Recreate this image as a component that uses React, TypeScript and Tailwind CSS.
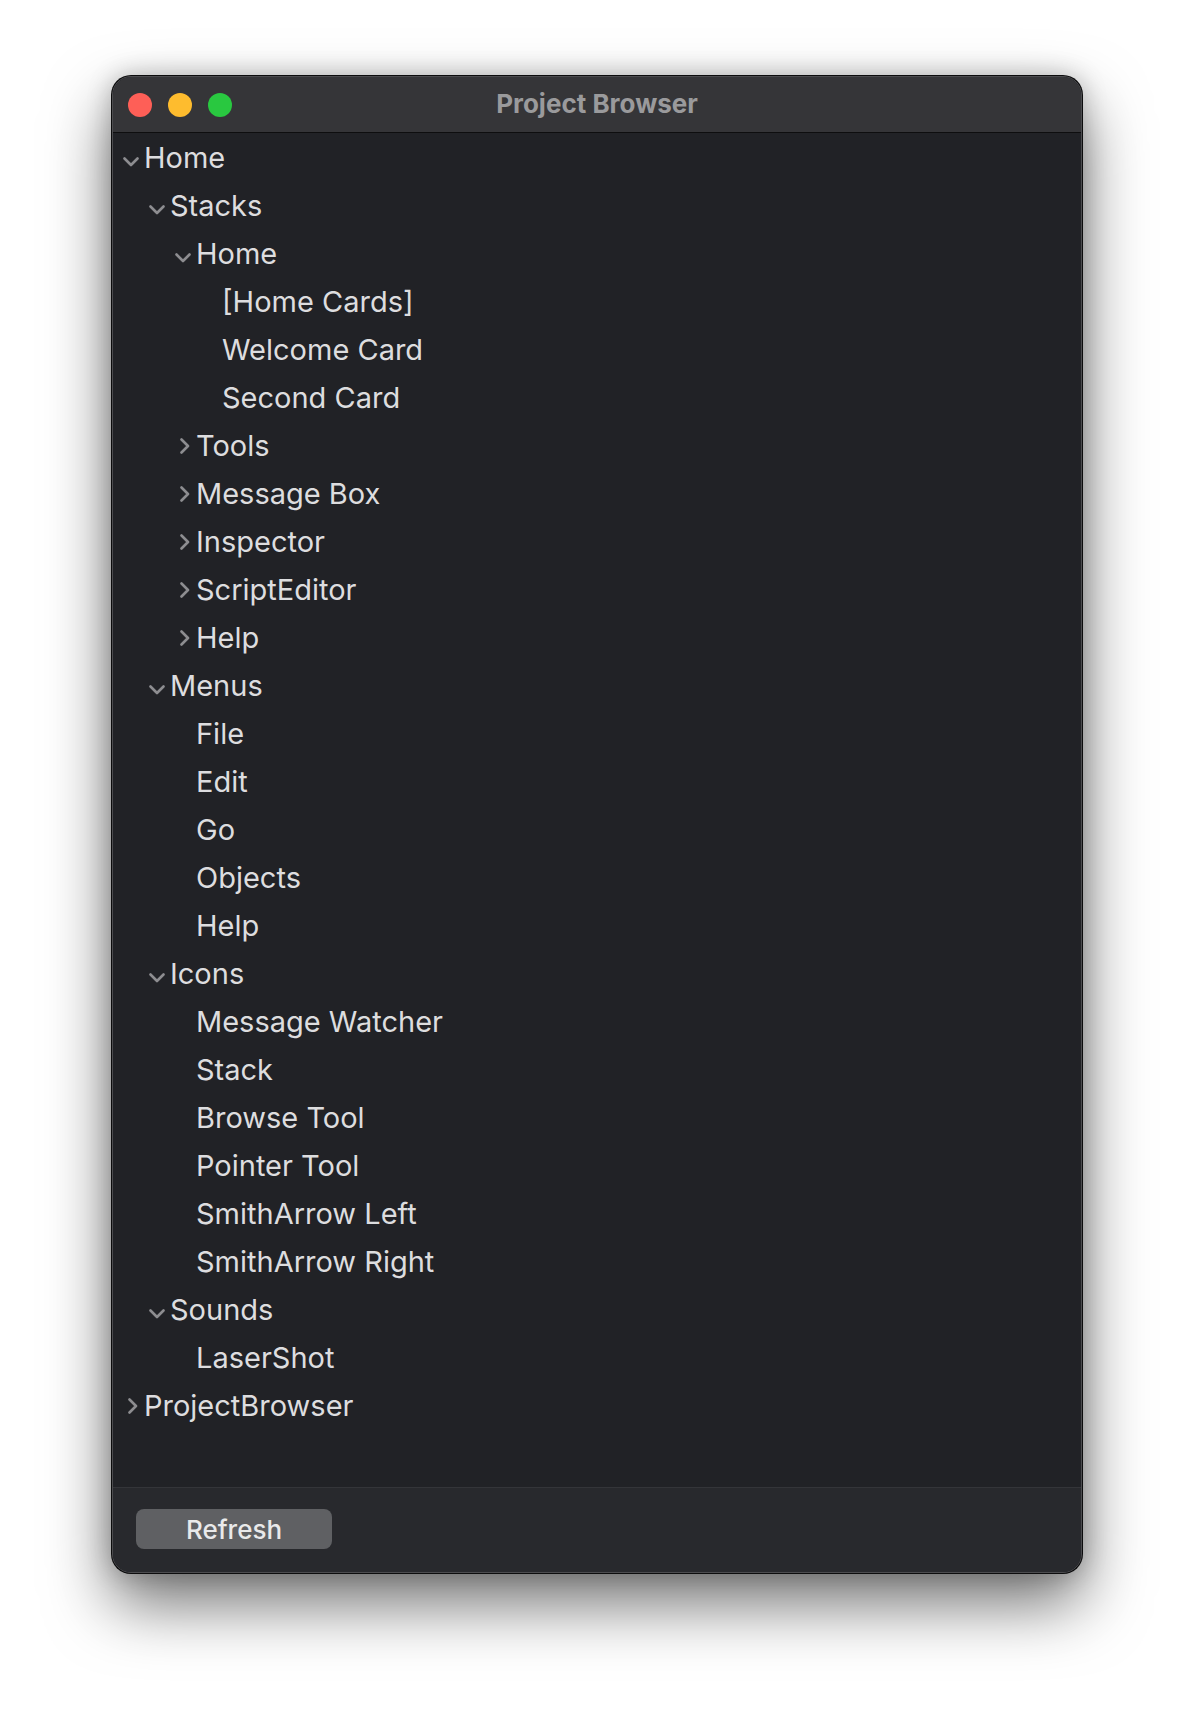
import React from "react";

type Node = { label: string; level: number; open?: boolean };

const rows: Node[] = [
  { label: "Home", level: 0, open: true },
  { label: "Stacks", level: 1, open: true },
  { label: "Home", level: 2, open: true },
  { label: "[Home Cards]", level: 3 },
  { label: "Welcome Card", level: 3 },
  { label: "Second Card", level: 3 },
  { label: "Tools", level: 2, open: false },
  { label: "Message Box", level: 2, open: false },
  { label: "Inspector", level: 2, open: false },
  { label: "ScriptEditor", level: 2, open: false },
  { label: "Help", level: 2, open: false },
  { label: "Menus", level: 1, open: true },
  { label: "File", level: 2 },
  { label: "Edit", level: 2 },
  { label: "Go", level: 2 },
  { label: "Objects", level: 2 },
  { label: "Help", level: 2 },
  { label: "Icons", level: 1, open: true },
  { label: "Message Watcher", level: 2 },
  { label: "Stack", level: 2 },
  { label: "Browse Tool", level: 2 },
  { label: "Pointer Tool", level: 2 },
  { label: "SmithArrow Left", level: 2 },
  { label: "SmithArrow Right", level: 2 },
  { label: "Sounds", level: 1, open: true },
  { label: "LaserShot", level: 2 },
  { label: "ProjectBrowser", level: 0, open: false },
];

function Disclosure({ open }: { open?: boolean }) {
  if (open === undefined) return <span className="w-[21px] shrink-0" />;
  return (
    <span className="flex h-full w-[21px] shrink-0 items-center">
      {open ? (
        <svg width="16" height="10" viewBox="0 0 16 10" className="mt-[8px]">
          <path d="M1.5 1.5 L8 8 L14.5 1.5" fill="none" stroke="#8d8d90" strokeWidth="2.6" strokeLinecap="round" strokeLinejoin="round" />
        </svg>
      ) : (
        <svg width="10" height="16" viewBox="0 0 10 16" className="ml-[5px]">
          <path d="M1.5 1.5 L8 8 L1.5 14.5" fill="none" stroke="#8d8d90" strokeWidth="2.6" strokeLinecap="round" strokeLinejoin="round" />
        </svg>
      )}
    </span>
  );
}

const indent = ["pl-[10px]", "pl-[36px]", "pl-[62px]", "pl-[88px]"];

export default function App() {
  return (
    <div className="min-h-[1722px] bg-white pl-[111px] pt-[75px] font-['Inter',sans-serif]">
      <div className="w-[972px] rounded-[20px] bg-[#0c0c0d] p-px shadow-[0_30px_64px_rgba(0,0,0,0.55),0_0_24px_rgba(0,0,0,0.22)]">
        <div className="flex h-[1497px] flex-col overflow-hidden rounded-[19px] border border-[#4c4c4f] bg-[#212226]">
          <div className="grid h-[56px] shrink-0 grid-cols-[1fr_auto_1fr] items-center border-b border-[#0e0e0f] bg-[#353538]">
            <div className="flex items-center gap-4 pl-[15px]">
              <span className="h-6 w-6 rounded-full bg-[#fe5f57]" />
              <span className="h-6 w-6 rounded-full bg-[#febc2e]" />
              <span className="h-6 w-6 rounded-full bg-[#29c840]" />
            </div>
            <div className="-mt-[2px] text-[26px] font-bold text-[#9a9a9c]">Project Browser</div>
            <div />
          </div>

          <div className="flex-1 pt-px">
            {rows.map((r, i) => (
              <div key={i} className={`flex h-[48px] items-center ${indent[r.level]}`}>
                <Disclosure open={r.open} />
                <span className="text-[29px] text-[#dddddf]">{r.label}</span>
              </div>
            ))}
          </div>

          <div className="h-[85px] shrink-0 border-t border-[#343539] bg-[#28292d] pl-[23px] pt-[21px]">
            <button className="h-[40px] w-[196px] rounded-[8px] bg-[#5f6063] text-[26px] font-medium text-[#e9e9ea]">
              Refresh
            </button>
          </div>
        </div>
      </div>
    </div>
  );
}
